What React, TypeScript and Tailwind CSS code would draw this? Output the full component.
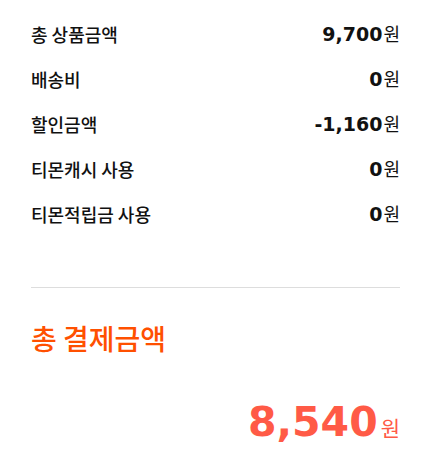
import React from "react";

const rows = [
  { label: "총 상품금액", value: "9,700" },
  { label: "배송비", value: "0" },
  { label: "할인금액", value: "-1,160" },
  { label: "티몬캐시 사용", value: "0" },
  { label: "티몬적립금 사용", value: "0" },
];

const kr = { fontFamily: '"Noto Sans CJK KR", "Noto Sans", sans-serif' };
const num = { fontFamily: '"DejaVu Sans", Verdana, sans-serif' };

export default function App() {
  return (
    <div className="w-[440px] h-[458px] bg-white pl-[31px] pr-[40px] pt-[11px] text-[#111]">
      <div className="flex flex-col">
        {rows.map((r) => (
          <div key={r.label} className="h-[45px] flex items-center justify-between">
            <span className="text-[18px] font-medium leading-none" style={kr}>
              {r.label}
            </span>
            <span className="flex items-baseline">
              <span className="text-[19px] font-bold leading-none" style={num}>
                {r.value}
              </span>
              <span className="text-[18px] leading-none ml-[1px]" style={kr}>
                원
              </span>
            </span>
          </div>
        ))}
      </div>
      <div className="mt-[51px] border-t border-[#dddddd] pt-[32px]">
        <div className="text-[28px] leading-[36px] font-medium text-[#ff5000]" style={kr}>
          총 결제금액
        </div>
        <div className="mt-[44px] flex justify-end items-baseline text-[#ff5a46]">
          <span className="text-[41px] font-bold leading-[44px]" style={num}>
            8,540
          </span>
          <span className="text-[21px] leading-none ml-[3px]" style={kr}>
            원
          </span>
        </div>
      </div>
    </div>
  );
}
